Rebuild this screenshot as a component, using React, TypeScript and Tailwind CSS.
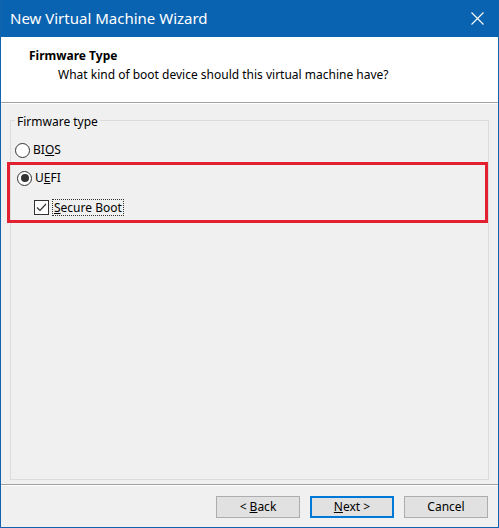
import React from "react";

function Radio({ checked }: { checked?: boolean }) {
  return (
    <span className="w-[15px] h-[15px] rounded-full border border-[#333333] bg-white flex items-center justify-center shrink-0">
      {checked && <span className="w-[8px] h-[8px] rounded-full bg-[#333333]" />}
    </span>
  );
}

function Checkbox() {
  return (
    <span className="w-[15px] h-[15px] border border-[#333333] bg-white flex items-center justify-center shrink-0">
      <svg width="13" height="13" viewBox="0 0 13 13">
        <path d="M2 6.5 L5 9.5 L11 3" fill="none" stroke="#333333" strokeWidth="1.2" />
      </svg>
    </span>
  );
}

export default function App() {
  const font = { fontFamily: '"Segoe UI", "Noto Sans", sans-serif' };
  return (
    <div
      className="w-[499px] h-[528px] flex flex-col bg-[#f0f0f0] border-x border-b border-[#1064ad] text-[12px] text-black"
      style={font}
    >
      <div className="h-[37px] bg-[#0a63b0] flex items-center justify-between pl-[9px] pr-[14px] shrink-0">
        <span className="text-[15px] text-white leading-none">New Virtual Machine Wizard</span>
        <svg width="13" height="13" viewBox="0 0 13 13">
          <path d="M0.5 0.5 L12.5 12.5 M12.5 0.5 L0.5 12.5" stroke="white" strokeWidth="1.1" />
        </svg>
      </div>
      <div className="h-[65px] bg-white shrink-0 pt-[10px]">
        <div className="pl-[28px] font-bold leading-[17px]">Firmware Type</div>
        <div className="pl-[57px] leading-[17px] mt-[2px]">What kind of boot device should this virtual machine have?</div>
      </div>
      <div className="h-[2px] border-t border-[#a0a0a0] bg-white shrink-0" />
      <div className="flex-1 px-[9px] pt-[16px] pb-[4px] flex flex-col">
        <div className="relative flex-1 border border-[#dcdcdc] pt-[19px] flex flex-col">
          <span className="absolute left-[4px] -top-[8px] bg-[#f0f0f0] px-[2px] leading-[17px]">Firmware type</span>
          <div className="flex items-center gap-[3px] pl-[4px] h-[20px]">
            <Radio />
            <span>
              BI<span className="underline">O</span>S
            </span>
          </div>
          <div className="-ml-[4px] mt-[2px] border-[3px] border-[#e3202f] h-[61px] pt-[3px]">
            <div className="flex items-center gap-[3px] pl-[7px] h-[20px]">
              <Radio checked />
              <span>
                U<span className="underline">E</span>FI
              </span>
            </div>
            <div className="flex items-center gap-[3px] pl-[24px] h-[20px] mt-[9px]">
              <Checkbox />
              <span className="border border-dotted border-[#333333] px-[1px] leading-[15px]">
                <span className="underline">S</span>ecure Boot
              </span>
            </div>
          </div>
        </div>
      </div>
      <div className="h-[2px] border-t border-[#a0a0a0] bg-white shrink-0" />
      <div className="h-[41px] flex items-start justify-end gap-[10px] pr-[10px] pt-[10px] shrink-0">
        <button className="w-[84px] h-[22px] bg-[#e1e1e1] border border-[#adadad] flex items-center justify-center">
          &lt; <span className="underline ml-[3px]">B</span>ack
        </button>
        <button className="w-[84px] h-[22px] bg-[#e1e1e1] border-2 border-[#0078d7] flex items-center justify-center">
          <span className="underline">N</span>ext &gt;
        </button>
        <button className="w-[84px] h-[22px] bg-[#e1e1e1] border border-[#adadad] flex items-center justify-center">
          Cancel
        </button>
      </div>
    </div>
  );
}
